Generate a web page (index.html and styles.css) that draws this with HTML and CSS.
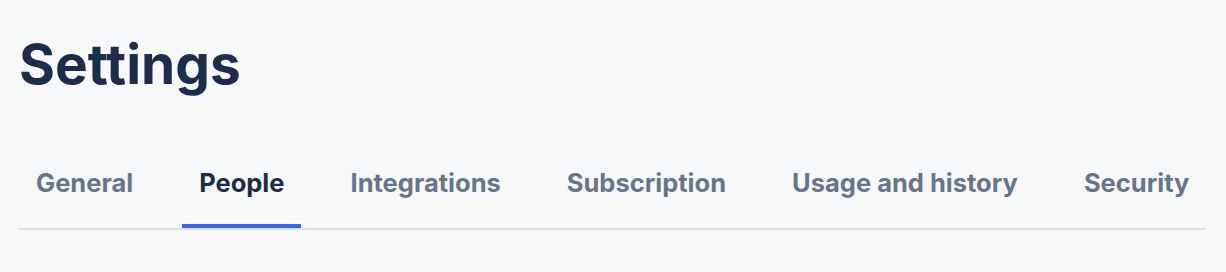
FILE: index.html
```html
<!DOCTYPE html>
<html lang="en">
<head>
<meta charset="utf-8">
<title>Settings</title>
<link rel="stylesheet" href="styles.css">
</head>
<body>
<main class="page">
  <h1 class="page-title">Settings</h1>
  <nav class="tabs">
    <a class="tab" href="#">General</a>
    <a class="tab tab--active" href="#">People</a>
    <a class="tab" href="#">Integrations</a>
    <a class="tab" href="#">Subscription</a>
    <a class="tab" href="#">Usage and history</a>
    <a class="tab" href="#">Security</a>
  </nav>
</main>
</body>
</html>
```

FILE: styles.css
```css
html, body {
  margin: 0;
  background: #f7f8fa;
}
body {
  font-family: "Inter", "Liberation Sans", sans-serif;
}
.page {
  padding: 29px 0 0 19px;
}
.page-title {
  margin: 0;
  font-size: 55px;
  line-height: 70px;
  font-weight: 700;
  color: #1b2d4a;
}
.tabs {
  display: inline-flex;
  gap: 32px;
  margin-top: 69px;
  border-bottom: 2px solid #dfe1e6;
}
.tab {
  display: block;
  padding: 0 17px 26px;
  font-size: 25.5px;
  line-height: 30px;
  font-weight: 700;
  color: #66758c;
  text-decoration: none;
  border-bottom: 4px solid transparent;
}
.tab--active {
  color: #1b2d4a;
  border-bottom-color: #3a63f5;
}
```
